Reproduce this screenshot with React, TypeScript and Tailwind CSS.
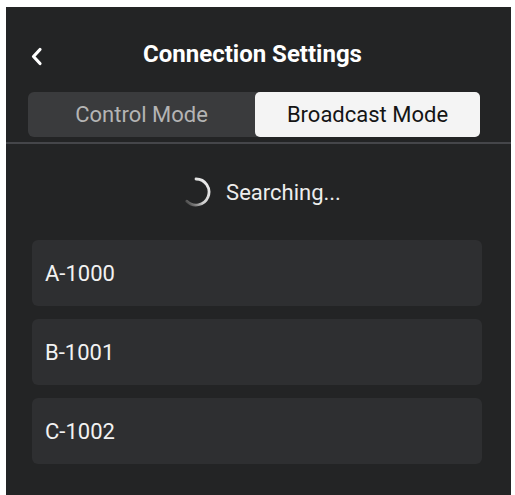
import React from "react";

const devices = ["A-1000", "B-1001", "C-1002"];

const Spinner = () => (
  <svg width="32" height="32" viewBox="0 0 32 32" className="shrink-0">
    <defs>
      <linearGradient id="spin" x1="1" y1="0" x2="0" y2="1">
        <stop offset="0" stopColor="#f2f2f2" />
        <stop offset="0.6" stopColor="#cfcfcf" />
        <stop offset="1" stopColor="#3a3a3a" />
      </linearGradient>
    </defs>
    <path
      d="M16 3 A13 13 0 1 1 6.8 25.2"
      fill="none"
      stroke="url(#spin)"
      strokeWidth="2.8"
      strokeLinecap="round"
    />
  </svg>
);

export default function App() {
  return (
    <div className="min-h-[495px] bg-white pl-[6px] pt-[7px] pr-[4px]">
      <div
        className="h-[488px] w-[505px] bg-[#232425] text-white"
        style={{ fontFamily: "Roboto, 'Liberation Sans', sans-serif" }}
      >
        <header className="relative flex h-[85px] items-center justify-center pr-[12px]">
          <svg
            width="13"
            height="19"
            viewBox="0 0 13 19"
            className="absolute left-[24px] top-[40px]"
          >
            <path
              d="M10 2.5 L3.5 9.5 L10 16.5"
              fill="none"
              stroke="white"
              strokeWidth="3.2"
              strokeLinecap="round"
              strokeLinejoin="round"
            />
          </svg>
          <h1 className="pt-[8px] text-[24px] font-bold">Connection Settings</h1>
        </header>

        <div className="ml-[22px] mr-[31px] flex h-[45px] rounded-[6px] bg-[#3a3b3d]">
          <button className="flex flex-1 items-center justify-center text-[22px] text-[#b4b4b4]">
            Control Mode
          </button>
          <button className="flex w-[225px] items-center justify-center rounded-[5px] bg-[#f4f4f4] text-[22px] text-[#151515]">
            Broadcast Mode
          </button>
        </div>

        <div className="mt-[5px] h-[2px] bg-[#45464a]" />

        <div className="flex h-[96px] items-center justify-center gap-[14px] pl-[4px]">
          <Spinner />
          <span className="text-[22px] text-[#ededed]">Searching...</span>
        </div>

        <ul className="ml-[26px] mr-[29px] flex flex-col gap-[13px]">
          {devices.map((d) => (
            <li
              key={d}
              className="flex h-[66px] items-center rounded-[6px] bg-[#2e2f31] px-[13px] text-[22px] text-[#f2f2f2]"
            >
              {d}
            </li>
          ))}
        </ul>
      </div>
    </div>
  );
}
